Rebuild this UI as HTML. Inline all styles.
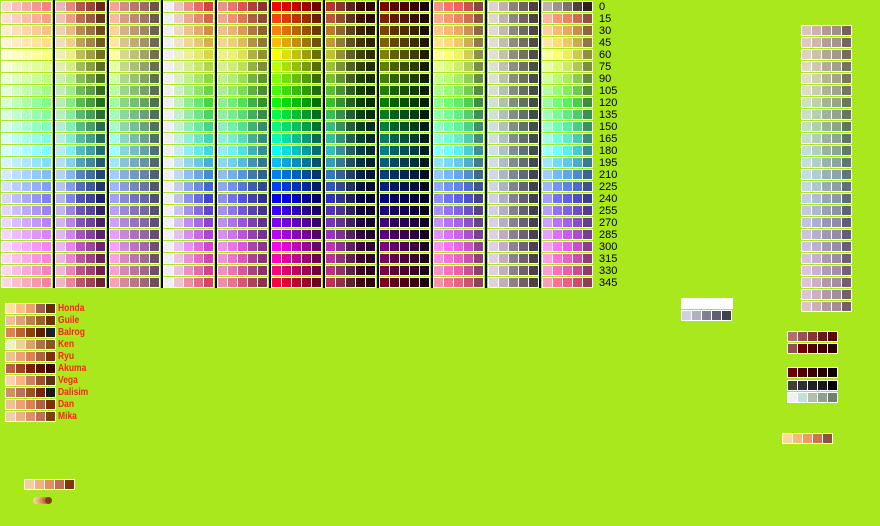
<!DOCTYPE html>
<html><head><meta charset="utf-8">
<style>
html,body{margin:0;padding:0}
body{width:880px;height:526px;background:#aae81e;position:relative;overflow:hidden;font-family:"Liberation Sans",sans-serif}
.r{position:absolute;width:49px;height:9px;background:#fff;padding:1px;display:flex;gap:1px}
.r i{display:block;width:9px;height:9px}
.b{position:absolute;top:0;width:2px;height:288px;background:#000}
.n{position:absolute;left:599px;font-size:11px;line-height:12px;color:#000}
.l{position:absolute;left:58px;font-size:10px;line-height:12px;color:#ff2020;font-weight:bold;transform:scaleX(.85);transform-origin:left}
.w{position:absolute;left:681px;top:298px;width:52px;height:11px;background:#fff}
.blob{position:absolute;top:497px;height:7px;width:7px;border-radius:50%}
</style></head><body>
<div class="n" style="top:1px">0</div><div class="n" style="top:13px">15</div><div class="n" style="top:25px">30</div><div class="n" style="top:37px">45</div><div class="n" style="top:49px">60</div><div class="n" style="top:61px">75</div><div class="n" style="top:73px">90</div><div class="n" style="top:85px">105</div><div class="n" style="top:97px">120</div><div class="n" style="top:109px">135</div><div class="n" style="top:121px">150</div><div class="n" style="top:133px">165</div><div class="n" style="top:145px">180</div><div class="n" style="top:157px">195</div><div class="n" style="top:169px">210</div><div class="n" style="top:181px">225</div><div class="n" style="top:193px">240</div><div class="n" style="top:205px">255</div><div class="n" style="top:217px">270</div><div class="n" style="top:229px">285</div><div class="n" style="top:241px">300</div><div class="n" style="top:253px">315</div><div class="n" style="top:265px">330</div><div class="n" style="top:277px">345</div>
<div class="l" style="top:303px">Honda</div><div class="l" style="top:315px">Guile</div><div class="l" style="top:327px">Balrog</div><div class="l" style="top:339px">Ken</div><div class="l" style="top:351px">Ryu</div><div class="l" style="top:363px">Akuma</div><div class="l" style="top:375px">Vega</div><div class="l" style="top:387px">Dalisim</div><div class="l" style="top:399px">Dan</div><div class="l" style="top:411px">Mika</div>
<div class="w"></div>
<div class="blob" style="left:33px;background:#f0d0a0"></div>
<div class="blob" style="left:36px;background:#f0b080"></div>
<div class="blob" style="left:39px;background:#e09060"></div>
<div class="blob" style="left:42px;background:#c07050"></div>
<div class="blob" style="left:45px;background:#804000"></div>
<script>
var B=document.body;
function row(x,y,cols){var d=document.createElement('div');d.className='r';d.style.left=x+'px';d.style.top=y+'px';
for(var i=0;i<5;i++){var e=document.createElement('i');e.style.background=cols[i];d.appendChild(e);}B.appendChild(d);}
function h(hh,s,l){return 'hsl('+hh+','+s+'%,'+l+'%)';}
var G=[
[[100,92],[100,87],[100,83],[100,79],[100,75]],
[[60,82],[75,72],[45,53],[43,44],[55,28]],
[[100,81],[50,69],[38,60],[24,52],[17,38]],
[[0,94],[60,85],[75,75],[73,66],[66,55]],
[[75,75],[80,69],[70,60],[47,47],[50,38]],
[[100,50],[100,44],[100,38],[100,31],[100,22]],
[[60,47],[50,38],[50,25],[100,13],[100,9]],
[[100,25],[100,19],[100,16],[100,12],[100,6]],
[[100,78],[100,72],[83,66],[58,56],[38,41]],
[[22,85],[14,72],[6,53],[8,41],[11,28]],
[[100,81],[100,72],[80,65],[55,55],[40,40]]
];
for(var g=0;g<11;g++){
 if(g>0){var b=document.createElement('div');b.className='b';b.style.left=(53+54*(g-1))+'px';B.appendChild(b);}
 for(var r=0;r<24;r++){var hu=r*15,c=[];
  for(var k=0;k<5;k++)c.push(h(hu,G[g][k][0],G[g][k][1]));
  if(g==10&&r==0)c=['#c0b0b0','#a09090','#807070','#504040','#302020'];
  row(1+54*g+(g>=9?1:0),1+12*r,c);}
}
for(var r=0;r<24;r++){var hu=(r*15)%360;row(801,25+12*r,[h(hu,30,82),h(hu,25,75),h(hu,15,65),h(hu,12,60),h(hu,12,42)]);}
var ch=[
['#ffe0a0','#ffc080','#f0a070','#a06050','#603000'],
['#f0c090','#e0a070','#c08040','#a06020','#703000'],
['#e08050','#c06030','#904000','#602000','#202020'],
['#f0f0c0','#f0d090','#e0a060','#b07040','#905020'],
['#f0c090','#f0a070','#e08050','#b06040','#803000'],
['#c06040','#a04020','#802000','#601000','#400000'],
['#ffd0b0','#ffb080','#d08060','#a05030','#603010'],
['#d09060','#c07050','#a05020','#802010','#181818'],
['#f0c090','#f0a070','#e08050','#b06040','#803000'],
['#f0d0a0','#f0b080','#e09060','#c07050','#804000']];
for(var i=0;i<10;i++)row(5,303+12*i,ch[i]);
row(681,310,['#d0d0e0','#b0b0c0','#808090','#606070','#404050']);
row(787,331,['#b07070','#a05050','#903030','#701818','#600808']);
row(787,343,['#905050','#700000','#500000','#400000','#300000']);
row(787,367,['#700000','#500000','#380000','#280000','#100000']);
row(787,380,['#404040','#303030','#202020','#181818','#000000']);
row(787,392,['#f0f0f0','#c0e0d8','#b0c0b0','#90a090','#708070']);
row(782,433,['#ffd898','#ffb878','#f09868','#d07050','#905040']);
row(24,479,['#f0d0a0','#f0b080','#e09060','#c07050','#803800']);
</script>
</body></html>
